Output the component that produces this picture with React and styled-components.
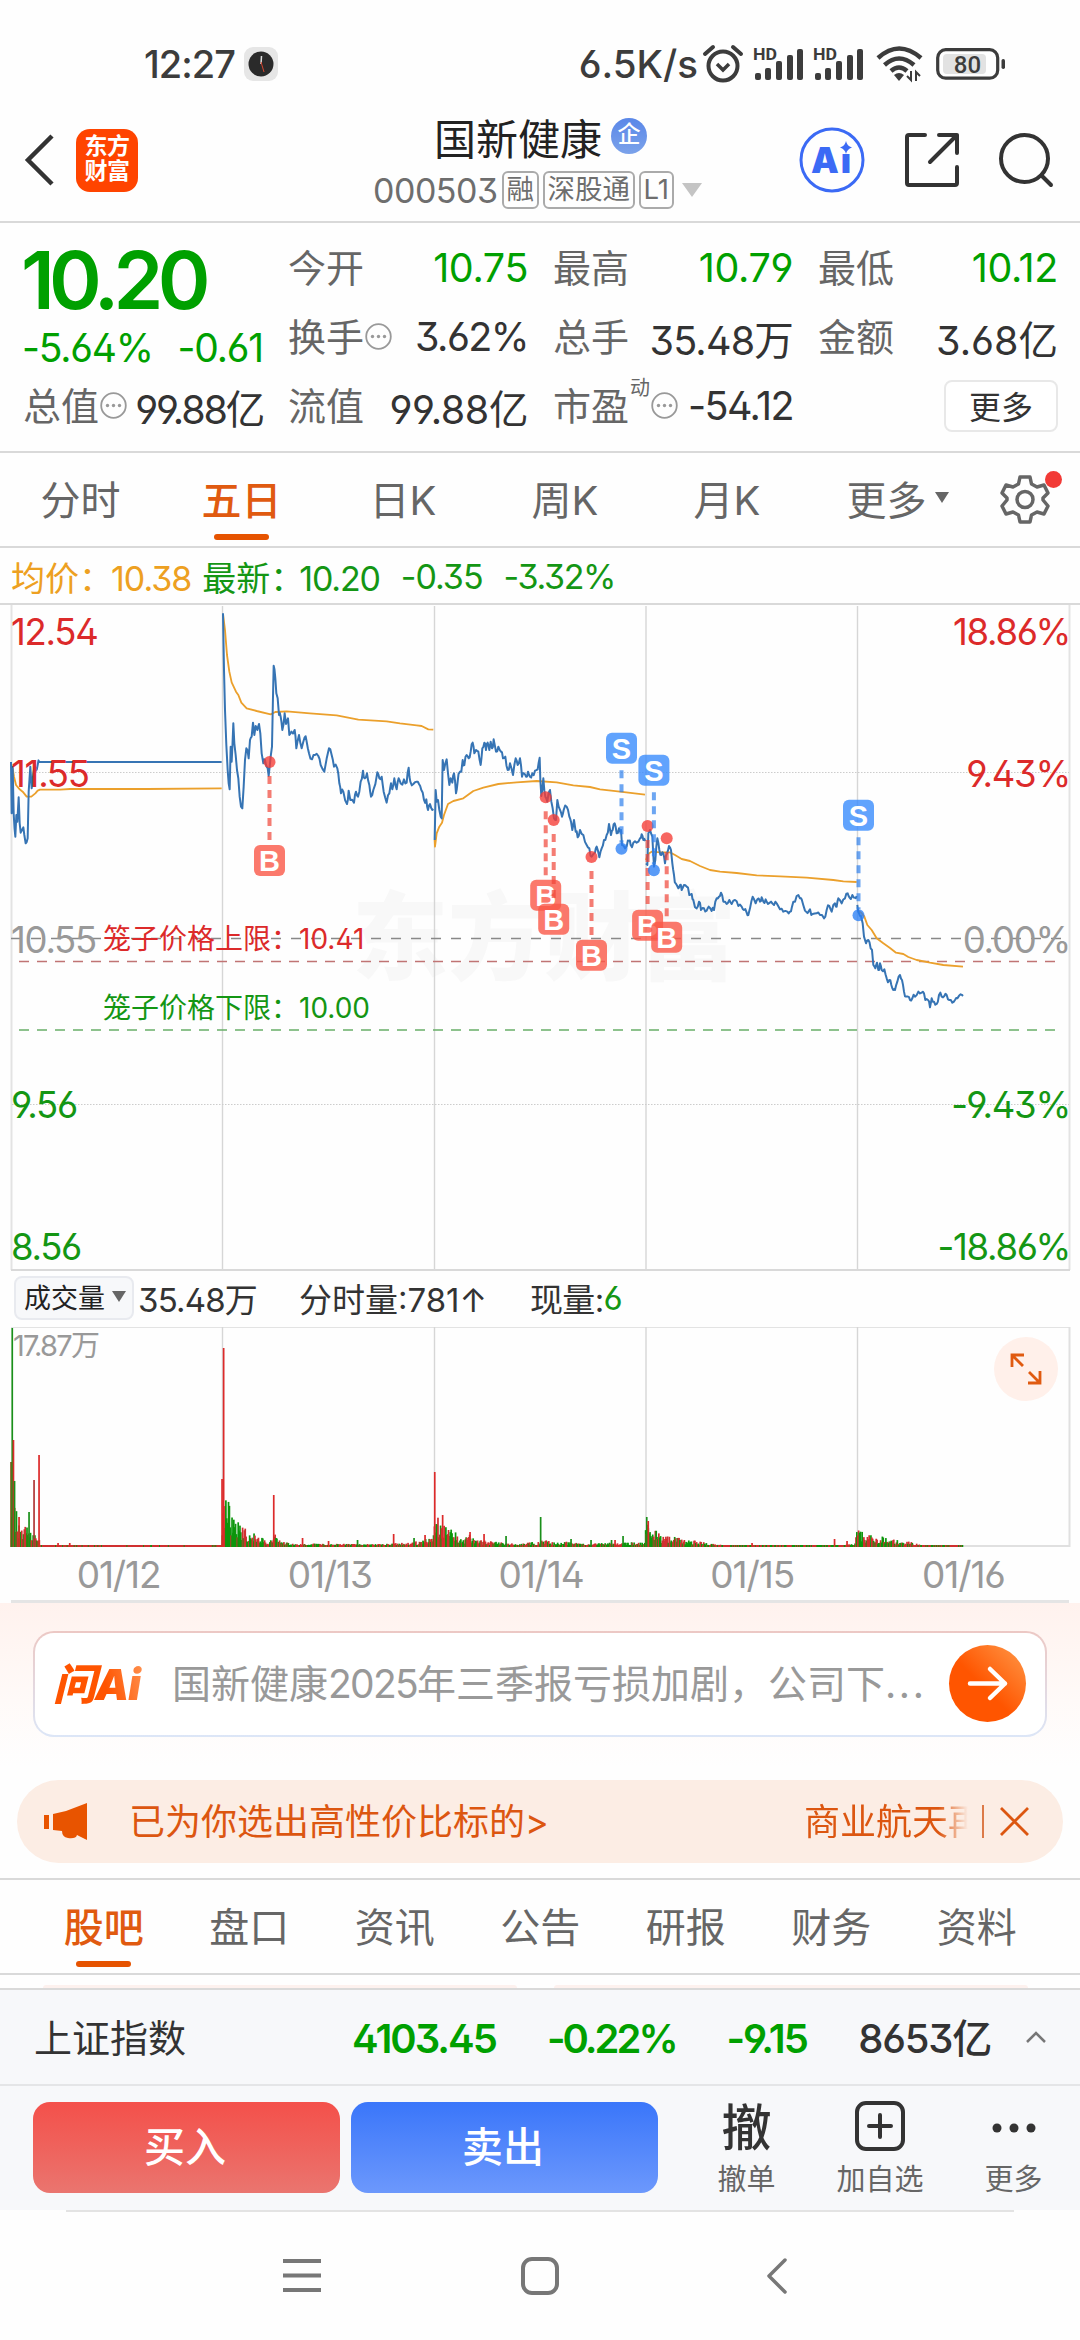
import React from "react";
import styled, { createGlobalStyle } from "styled-components";


const GlobalStyle = createGlobalStyle`
  * {
    box-sizing: border-box;
  }

  body {
    margin: 0;
    background: #fefefe;
    color: #333;
    font-family: Inter, "Noto Sans CJK SC", sans-serif;
    font-feature-settings: "ss01";
    white-space: nowrap;
  }

  svg {
    display: block;
    flex: none;
    overflow: visible;
  }
`;

const Screen = styled.div`
  width: 1080px;
  height: 2340px;
  overflow: hidden;
  display: flex;
  flex-direction: column;
`;

const Num = styled.span`
  font-size: ${(p) => p.$size || 40}px;
  font-weight: ${(p) => p.$weight || 400};
  letter-spacing: ${(p) => p.$spacing ?? -0.03}em;
  margin-left: ${(p) => p.$left || 0}px;
  color: ${(p) => p.$color || "inherit"};
`;

/* status bar */

const StatusBar = styled.div`
  height: 100px;
  padding: 28px 73px 0 144px;
  display: flex;
  align-items: center;
  color: #3c3c3c;
`;

const ClockBadge = styled.div`
  width: 34px;
  height: 34px;
  margin-left: 9px;
  border-radius: 9px;
  background: #e6e6e6;
  display: flex;
  align-items: center;
  justify-content: center;
`;

const StatusRight = styled.div`
  margin-left: auto;
  display: flex;
  align-items: center;
`;

/* header */

const Header = styled.header`
  height: 123px;
  border-bottom: 2px solid #d9d9d9;
  padding: 0 27px 0 24px;
  display: flex;
  align-items: center;
`;

const Logo = styled.div`
  width: 62px;
  height: 63px;
  margin-left: 22px;
  border-radius: 14px;
  background: #ff4400;
  color: #fff;
  font-size: 23px;
  line-height: 25px;
  font-weight: 700;
  text-align: center;
  padding-top: 5px;
  white-space: normal;
  letter-spacing: -0.5px;
`;

const TitleBlock = styled.div`
  width: 332px;
  margin-left: 235px;
  height: 104px;
  display: flex;
  flex-direction: column;
`;

const TitleRow = styled.div`
  display: flex;
  align-items: center;
  height: 56px;
  padding-left: 61px;
  font-size: 42px;
  font-weight: 400;
  color: #222;
`;

const CompanyBadge = styled.div`
  width: 36px;
  height: 36px;
  margin-left: 9px;
  border-radius: 50%;
  background: linear-gradient(#5a87e8, #7ba2ea);
  color: #fff;
  font-size: 23px;
  font-weight: 500;
  line-height: 33px;
  text-align: center;
`;

const CodeRow = styled.div`
  display: flex;
  align-items: center;
  height: 48px;
  padding-top: 4px;
  gap: 4.5px;
  color: #6e6e6e;
`;

const Tag = styled.span`
  height: 38px;
  padding: 0 2.5px;
  border: 2px solid #aaa;
  border-radius: 6px;
  font-size: 27.5px;
  line-height: 32px;
`;

const HeaderIcons = styled.div`
  margin-left: auto;
  display: flex;
  align-items: center;
  gap: 40px;
`;

/* quote */

const Quote = styled.section`
  height: 230px;
  border-bottom: 2px solid #d9d9d9;
  padding: 11px 22px 0 23px;
  display: grid;
  grid-template-columns: 240px 240px 240px 240px;
  grid-template-rows: 69px 69px 69px;
  column-gap: 25px;
`;

const PriceCell = styled.div`
  grid-row: span 2;
  color: #00a000;
  display: flex;
  flex-direction: column;
`;

const BigPrice = styled.div`
  height: 90px;
  margin-left: -2px;
  line-height: 91px;
  font-size: 80px;
  font-weight: 600;
  letter-spacing: -0.072em;
`;

const Change = styled.div`
  height: 50px;
  margin-left: -1px;
  display: flex;
  align-items: center;
  justify-content: space-between;
`;

const Cell = styled.div`
  display: flex;
  align-items: center;
  justify-content: space-between;
`;

const CellLabel = styled.div`
  display: flex;
  align-items: center;
  margin-top: -5px;
  font-size: 38px;
  color: #666;
`;

const Sup = styled.sup`
  font-size: 20px;
  line-height: 20px;
  align-self: flex-start;
  margin-top: 2px;
  margin-left: 1px;
`;

const MoreButton = styled.button`
  width: 114px;
  height: 52px;
  margin-left: auto;
  padding: 0 0 3px;
  border: 2px solid #e8e8e8;
  border-radius: 8px;
  background: #fff;
  color: #333;
  font: 400 32px/42px "Noto Sans CJK SC", sans-serif;
`;

/* tabs */

const Tabs = styled.nav`
  height: ${(p) => p.$height}px;
  padding-left: ${(p) => p.$left || 0}px;
  border-top: ${(p) => (p.$topLine ? "2px solid #d9d9d9" : 0)};
  border-bottom: 2px solid #d9d9d9;
  display: flex;
  flex: none;
`;

const Tab = styled.div`
  width: ${(p) => p.$width}px;
  padding-bottom: 3px;
  display: flex;
  align-items: center;
  justify-content: center;
  position: relative;
  font-size: 40px;
  font-weight: ${(p) => (p.$active ? 500 : 400)};
  color: ${(p) => (p.$active ? "#e05a10" : "#666")};

  &::after {
    content: "";
    display: ${(p) => (p.$active ? "block" : "none")};
    position: absolute;
    bottom: 6px;
    width: 55px;
    height: 6px;
    border-radius: 3px;
    background: #e65300;
  }
`;

const Triangle = styled.i`
  width: 0;
  height: 0;
  margin-left: ${(p) => p.$gap || 0}px;
  border: ${(p) => p.$w}px solid transparent;
  border-top: ${(p) => p.$h}px solid ${(p) => p.$color};
  border-bottom: 0;
`;

const Settings = styled.div`
  width: 76px;
  display: flex;
  align-items: center;
  justify-content: center;
`;

const Legend = styled.div`
  height: 57px;
  padding: 2px 0 0 11px;
  display: flex;
  align-items: center;
  font-size: 34px;
  border-bottom: 2px solid #d9d9d9;
`;

const LegendItem = styled.span`
  color: ${(p) => p.$color};
  margin-right: ${(p) => p.$gap || 0}px;
`;

/* charts */

const ChartBox = styled.div`
  position: relative;
  width: 1080px;
  height: ${(p) => p.$height}px;
  flex: none;
`;

const Axis = styled.div`
  position: absolute;
  inset: 0 10px 0 11px;
  pointer-events: none;
`;

const AxisLabel = styled.span`
  position: absolute;
  top: ${(p) => p.$y}px;
  ${(p) => (p.$right ? "right: 0;" : "left: 0;")}
  transform: translateY(-50%);
  font-size: 36.5px;
  line-height: 40px;
  letter-spacing: -0.035em;
  color: ${(p) => p.$color};
`;

const CageLabel = styled(AxisLabel)`
  left: 92px;
  font-size: 28px;
  letter-spacing: 0;
`;

const VolumeHeader = styled.div`
  height: 55px;
  padding: 0 0 3px 14px;
  display: flex;
  align-items: center;
  color: #333;
`;

const Picker = styled.div`
  width: 120px;
  height: 44px;
  margin-right: 4px;
  border: 2px solid #e8eaef;
  border-radius: 8px;
  background: #f7f8fa;
  display: flex;
  align-items: center;
  padding: 0 0 2px 8px;
  font-size: 27px;
  color: #222;
`;

const MaxVolume = styled.span`
  position: absolute;
  left: 13px;
  top: 3px;
  font-size: 29px;
  line-height: 32px;
  letter-spacing: -0.06em;
  color: #999;
`;

const ExpandButton = styled.div`
  position: absolute;
  right: 22px;
  top: 10px;
  width: 64px;
  height: 64px;
  border-radius: 50%;
  background: #fff0ea;
  display: flex;
  align-items: center;
  justify-content: center;
`;

const Dates = styled.div`
  height: 56px;
  padding: 2px 0 0 2px;
  margin: 0 11px;
  border-bottom: 3px solid #e5e5e5;
  display: grid;
  grid-template-columns: repeat(5, 1fr);
  align-items: center;
  text-align: center;
  color: #999;
`;

/* assistant and notice */

const AskSection = styled.section`
  height: 178px;
  padding: 28px 33px 0;
  background: linear-gradient(#fff2ee, #fffaf8 55%, #fefefe 92%);
`;

const AskBox = styled.div`
  height: 106px;
  border: 2px solid transparent;
  border-radius: 21px;
  background:
    linear-gradient(#fff, #fff) padding-box,
    linear-gradient(#ecc8c4, #dce6f7) border-box;
  display: flex;
  align-items: center;
  padding: 0 19px 0 18px;
`;

const AskLogo = styled.div`
  width: 94px;
  font-size: 43px;
  font-weight: 900;
  font-style: italic;
  letter-spacing: -1px;
  line-height: 50px;
  background: linear-gradient(75deg, #ff5400 55%, #ff9858);
  -webkit-background-clip: text;
  color: transparent;
`;

const AskText = styled.div`
  margin: -5px 0 0 25px;
  width: 766px;
  font-size: 39px;
  color: #999;
`;

const Notice = styled.section`
  height: 83px;
  margin: 0 17px 15px;
  padding: 0 33px 0 27px;
  border-radius: 42px;
  background: #fcede4;
  color: #dc5610;
  display: flex;
  align-items: center;
`;

const NoticeText = styled.span`
  margin: -5px 0 0 41px;
  font-size: 36px;
  font-weight: 400;
`;

const FadeText = styled(NoticeText)`
  width: 164px;
  margin-left: auto;
  overflow: hidden;
  background: linear-gradient(90deg, #dc5610 82%, rgba(220, 86, 16, 0) 100%);
  -webkit-background-clip: text;
  color: transparent;
`;

const Divider = styled.i`
  width: 2px;
  height: 33px;
  margin: 0 15px 0 14px;
  background: #dc7a48;
`;

const CardPeek = styled.div`
  height: 15px;
  flex: none;
  border-bottom: 2px solid #d9d9d9;
  padding: 10px 52px 0 43px;
  display: flex;
  gap: 37px;

  i {
    flex: 1;
    border-radius: 14px 14px 0 0;
    background: #fdf1ee;
  }
`;

/* bottom */

const IndexBar = styled.div`
  height: 96px;
  padding: 0 33px 3px 34px;
  background: #f7f8fa;
  border-bottom: 2px solid #e4e5e7;
  display: flex;
  align-items: center;
  font-size: 38px;
`;

const IndexNumbers = styled.div`
  margin-left: auto;
  display: flex;
  align-items: baseline;
  gap: 51px;
  color: #00a000;
`;

const ActionBar = styled.div`
  height: 124px;
  padding: 16px 0 0 33px;
  background: #f7f8fa;
  display: flex;
`;

const TradeButton = styled.button`
  flex: none;
  width: 307px;
  height: 91px;
  margin-right: 11px;
  padding: 0 3px 7px 0;
  border: 0;
  border-radius: 17px;
  background: linear-gradient(${(p) => p.$from}, ${(p) => p.$to});
  color: #fff;
  font: 500 41px/84px "Noto Sans CJK SC", sans-serif;
`;

const Action = styled.div`
  flex: none;
  width: ${(p) => p.$width}px;
  display: flex;
  flex-direction: column;
  align-items: center;
  font-size: 29px;
  line-height: 34px;
  color: #666;
`;

const ActionIcon = styled.div`
  height: 62px;
  margin: -5px 0 4px;
  display: flex;
  align-items: center;
  font-size: 50px;
  font-weight: 500;
  line-height: 54px;
  color: #333;
`;

const SystemNav = styled.div`
  height: 130px;
  margin: 0 66px;
  border-top: 2px solid #e3e3e3;
  display: flex;
  align-items: center;
  justify-content: center;
  gap: 200px;
`;

const GREEN = "#149614";
const RED = "#dc2a2a";
const GRAY = "#999";

// Each day is drawn in units of a third of a pixel, from the day's own left offset
const days = [
  {
    x: 0,
    price: "33,486 35,640 38,500 41,640 46,710 49,645 52,665 56,592 59,670 62,698 66,690 70,682 73,705 77,730 83,715 86,575 91,500 95,565 100,520 105,500 108,512 113,495 118,486 665,486",
    avg: "38,505 42,530 48,555 58,567 68,575 80,590 94,590 106,580 113,572 120,569 180,569 210,567 440,567 665,565",
  },
  {
    x: 0,
    price: "669,40 672,210 675,330 679,435 683,510 686,550 689,568 692,440 695,485 700,370 703,430 707,465 711,510 715,535 719,590 723,620 727,625 731,560 735,480 739,445 746,475 750,420 755,410 759,368 763,405 767,378 772,390 777,372 781,400 785,460 790,490 795,480 800,500 806,528 812,470 816,440 821,197 826,235 829,280 833,295 837,345 842,350 847,390 854,340 858,372 864,355 868,405 874,395 884,390 889,445 897,405 905,445 914,412 920,425 927,460 936,478 945,465 955,468 962,495 973,515 987,445 995,465 1002,500 1012,505 1018,550 1023,580 1030,575 1041,612 1046,572 1051,600 1062,608 1068,575 1074,590 1082,545 1089,512 1094,535 1101,520 1108,555 1113,590 1120,570 1132,517 1138,535 1145,530 1151,575 1160,608 1168,580 1173,550 1177,568 1183,535 1190,568 1196,535 1202,550 1212,538 1220,548 1226,503 1231,545 1240,552 1250,545 1257,552 1264,570 1272,600 1279,598 1284,630 1290,612 1294,625 1300,627",
    avg: "669,42 675,90 681,165 688,215 695,247 708,275 715,285 724,308 740,325 770,333 812,343 826,336 860,334 930,340 1010,346 1075,359 1160,364 1200,370 1250,376 1265,378 1285,388 1300,389",
  },
  {
    x: 420,
    price: "44,720 47,570 50,605 54,600 58,630 62,650 65,655 68,480 72,510 76,490 80,478 84,520 88,555 92,535 97,548 102,520 108,580 113,545 118,518 124,515 128,480 133,495 140,465 146,475 152,455 158,428 163,460 168,450 175,455 182,495 187,445 193,428 198,450 203,428 208,450 212,425 216,445 221,418 228,455 235,440 243,455 249,475 256,470 263,510 270,490 279,525 287,475 293,495 300,475 306,530 312,520 318,530 324,515 330,530 337,520 345,512 353,508 359,473 361,540 364,588 370,535 376,590 382,605 390,570 394,605 402,655 408,660 412,600 420,630 426,650 431,630 440,620 448,650 453,665 457,690 462,660 467,695 473,712 480,690 490,705 500,735 508,745 515,770 525,758 530,740 538,772 545,745 552,720 560,705 567,672 573,705 578,690 584,670 590,700 597,685 603,690 606,735 615,745 620,740 627,722 632,735 640,728 650,728 660,715 665,703 670,720 676,723",
    avg: "44,720 45,740 50,700 58,680 66,668 72,645 84,612 100,603 130,595 160,573 190,563 235,552 290,547 350,543 410,547 460,556 510,561 540,568 600,575 675,584",
  },
  {
    x: 420,
    price: "678,790 682,795 685,700 690,690 697,710 702,800 706,780 712,715 718,750 724,765 730,760 735,790 741,760 747,738 753,750 757,790 762,825 767,850 775,865 780,855 785,870 792,855 800,860 808,885 815,882 820,900 830,925 837,905 843,930 852,925 860,932 866,920 875,933 882,930 890,895 897,890 903,878 910,905 920,912 928,900 935,912 945,900 955,918 965,920 972,930 980,938 985,945 990,925 998,890 1007,910 1012,898 1020,905 1025,892 1030,905 1037,898 1044,912 1053,905 1062,915 1070,910 1080,928 1090,935 1102,935 1110,935 1116,920 1120,905 1130,888 1140,895 1145,898 1155,932 1170,928 1178,942 1190,940 1200,945 1212,955 1220,930 1228,918 1235,935 1245,910 1250,920 1255,895 1265,910 1275,895 1283,880 1288,892 1297,885 1305,893 1310,888",
    avg: "678,780 684,762 695,755 720,757 750,757 765,765 785,777 810,783 840,798 870,810 900,815 950,819 1010,826 1080,829 1160,833 1240,840 1270,844 1310,846",
  },
  {
    x: 700,
    price: "472,915 477,940 483,948 488,970 492,1010 498,1030 505,1020 512,1045 516,1050 520,1095 526,1105 531,1088 535,1110 540,1090 545,1110 553,1108 560,1135 568,1140 574,1155 580,1170 585,1170 592,1145 600,1125 606,1140 612,1175 618,1190 624,1190 630,1200 637,1195 645,1190 655,1175 665,1178 672,1180 676,1200 684,1200 690,1222 695,1195 702,1205 710,1212 717,1185 725,1190 733,1188 740,1185 748,1200 757,1208 765,1200 772,1195 782,1183 789,1188",
    avg: "472,930 485,940 493,950 502,975 515,990 530,1015 550,1030 570,1044 588,1058 610,1062 625,1071 650,1080 690,1088 730,1095 789,1100",
  },
];

const marks = [
  { t: "B", x: 269.5, dot: 762, box: 860.5 },
  { t: "B", x: 545.7, dot: 797.3, box: 895.3 },
  { t: "B", x: 553.7, dot: 820, box: 919.3 },
  { t: "B", x: 591.5, dot: 857, box: 955.3 },
  { t: "S", x: 621.5, dot: 848.7, box: 748.3 },
  { t: "B", x: 647.6, dot: 826, box: 925.3 },
  { t: "S", x: 653.9, dot: 870.3, box: 770.3 },
  { t: "B", x: 666.7, dot: 838.3, box: 937.3 },
  { t: "S", x: 858.5, dot: 915.3, box: 815.3 },
];

const dayLines = [222.5, 434.5, 646, 857.5];

const noise = (n) => {
  const v = Math.sin(n * 12.9898) * 43758.5453;
  return v - Math.floor(v);
};

// adds a small tick between two neighbouring prices
const roughen = (points) => {
  const list = points.split(" ").map((p) => p.split(",").map(Number));
  return list
    .flatMap(([x, y], i) => {
      const next = list[i + 1];
      if (!next || next[0] - x > 20 || next[0] - x < 5) return [[x, y]];
      const mx = (x + next[0]) / 2;
      const my = (y + next[1]) / 2 + (noise(x) - 0.5) * 20;
      return [[x, y], [mx, my]];
    })
    .join(" ");
};

const volumeLevels = [
  [12, 60], [15, 40], [18, 22], [22, 13], [26, 20], [28, 28], [32, 12], [36, 20], [39, 12], [40, 1.5], [222, 1.5],
  [223, 50], [226, 46], [230, 34], [236, 23], [242, 17], [250, 13], [260, 9], [270, 5], [275, 14], [280, 6], [290, 3], [380, 2.5], [412, 4], [433, 8],
  [434, 28], [440, 24], [446, 19], [452, 14], [462, 9], [470, 11], [480, 6], [500, 4], [520, 3], [545, 6], [555, 4], [575, 5], [590, 3], [620, 4], [645, 4],
  [646, 30], [650, 16], [656, 14], [664, 9], [670, 9], [676, 10], [685, 6], [695, 6], [710, 3], [730, 1.5], [840, 1.5], [855, 3],
  [857, 15], [865, 12], [872, 10], [880, 9], [890, 8], [900, 5], [910, 5], [920, 2], [963, 1.5],
];

const spikes = [
  [11, 85, "#7c5010"], [12.2, 219, "#1a8f1a"], [13.4, 107, "#dc2a2a"], [14.5, 66, "#1a8f1a"], [19, 30, "#dc2a2a"], [29, 35, "#1a8f1a"],
  [34, 67, "#b03838"], [39, 92, "#dc2a2a"], [58, 4, "#dc2a2a"], [69.7, 4, "#dc2a2a"],
  [222, 68, "#dc2a2a"], [223.6, 199, "#dc2a2a"], [273.7, 52, "#dc2a2a"], [302.5, 9, "#dc2a2a"], [328.5, 6, "#dc2a2a"], [357.5, 7, "#1a8f1a"],
  [393.6, 13, "#dc2a2a"], [414, 9, "#1a8f1a"], [425, 12, "#dc2a2a"],
  [434.7, 75, "#dc2a2a"], [442.6, 32, "#dc2a2a"], [470, 15, "#dc2a2a"], [484, 13, "#dc2a2a"], [506, 11, "#1a8f1a"], [540.6, 30, "#1a8f1a"],
  [571, 8, "#1a8f1a"], [591, 7, "#1a8f1a"], [611.5, 7, "#1a8f1a"], [615, 7, "#dc2a2a"], [623, 11, "#1a8f1a"],
  [646.7, 30, "#1a8f1a"], [648.2, 26, "#dc2a2a"], [752, 4, "#dc2a2a"], [834.5, 8, "#dc2a2a"], [847, 6, "#dc2a2a"],
];

const volumeBars = [];
for (let x = 12; x < 963; x += 0.88) {
  const i = volumeLevels.findIndex((l) => l[0] > x);
  const [x0, h0] = volumeLevels[i - 1];
  const [x1, h1] = volumeLevels[i];
  const level = h0 + ((h1 - h0) * (x - x0)) / (x1 - x0);
  const greenShare = x > 222 && x < 242 ? 0.95 : x > 40 && x < 222 ? 0.1 : 0.5;
  volumeBars.push([
    x,
    level < 2 ? 2 : Math.max(2, level * (0.35 + noise(x) * 0.85)),
    noise(x + 7) < greenShare ? "#0c960c" : "#d03030",
  ]);
}

const PriceChart = () => (
  <ChartBox $height={667}>
    <svg width="1080" height="667" viewBox="0 605 1080 667" fill="none">
      <text x="544" y="972" textAnchor="middle" fontFamily="Noto Sans CJK SC" fontSize="96" fontWeight="900" fill="#f8f8f8">东方财富</text>
      {dayLines.map((x) => (
        <path key={x} d={`M${x} 606V1270`} stroke="#d6d6d6" strokeWidth="1.4" />
      ))}
      <path d="M11.5 605V1270M1069.5 605V1270" stroke="#e3e3e3" strokeWidth="2" />
      <path d="M11 1270H1070" stroke="#d9d9d9" strokeWidth="2" />
      <path d="M12 772.5H1069M12 1104.5H1069" stroke="#ccc" strokeDasharray="1.5 1.5" />
      <path d="M11 938.5H1069" stroke="#888" strokeWidth="1.5" strokeDasharray="10 10" />
      <path d="M19 961.5H1055" stroke="#c07474" strokeWidth="1.4" strokeDasharray="10 8" />
      <path d="M19 1030H1055" stroke="#68ae68" strokeWidth="1.4" strokeDasharray="10 8" />
      {days.map((d, i) => (
        <g key={i} transform={`translate(${d.x} 600) scale(0.33333)`} strokeLinejoin="round">
          <polyline points={d.avg} stroke="#eba02c" strokeWidth="5.5" />
          <polyline points={roughen(d.price)} stroke="#3674b4" strokeWidth="6" />
        </g>
      ))}
      {marks.map((m) => {
        const buy = m.t === "B";
        return (
          <g key={m.x}>
            <path
              d={buy ? `M${m.x} ${m.dot + 14}V${m.box - 20}` : `M${m.x} ${m.box + 22}V${m.dot - 6}`}
              stroke={buy ? "#f04438" : "#2f80ed"}
              strokeOpacity="0.7"
              strokeWidth="4"
              strokeDasharray="8 6"
            />
            <circle cx={m.x} cy={m.dot} r="6" fill={buy ? "#f53b35" : "#2a7ff5"} fillOpacity="0.78" />
            <rect x={m.x - 15.5} y={m.box - 15.5} width="31" height="31" rx="6" fill={buy ? "#fa5847" : "#3a8cfc"} fillOpacity="0.8" />
            <text x={m.x} y={m.box + 10.5} textAnchor="middle" fontFamily="Liberation Sans" fontSize="29" fontWeight="700" fill="#fff">
              {m.t}
            </text>
          </g>
        );
      })}
    </svg>
    <Axis>
      <AxisLabel $y={27} $color={RED}>12.54</AxisLabel>
      <AxisLabel $y={169} $color={RED}>11.55</AxisLabel>
      <AxisLabel $y={335} $color={GRAY}>10.55</AxisLabel>
      <AxisLabel $y={500} $color={GREEN}>9.56</AxisLabel>
      <AxisLabel $y={642} $color={GREEN}>8.56</AxisLabel>
      <AxisLabel $right $y={27} $color={RED}>18.86%</AxisLabel>
      <AxisLabel $right $y={169} $color={RED}>9.43%</AxisLabel>
      <AxisLabel $right $y={335} $color={GRAY}>0.00%</AxisLabel>
      <AxisLabel $right $y={500} $color={GREEN}>-9.43%</AxisLabel>
      <AxisLabel $right $y={642} $color={GREEN}>-18.86%</AxisLabel>
      <CageLabel $y={334} $color={RED}>笼子价格上限：10.41</CageLabel>
      <CageLabel $y={403} $color={GREEN}>笼子价格下限：10.00</CageLabel>
    </Axis>
  </ChartBox>
);

const VolumeChart = () => (
  <ChartBox $height={220}>
    <svg width="1080" height="220" fill="none">
      <path d="M11 .5H1070" stroke="#e3e3e3" />
      {dayLines.map((x) => (
        <path key={x} d={`M${x} 0V219`} stroke="#d6d6d6" strokeWidth="1.4" />
      ))}
      <path d="M1069.5 0V219H11" stroke="#e0e0e0" strokeWidth="2" />
      {[...volumeBars, ...spikes].map(([x, h, color], i) => (
        <rect key={i} x={x - 0.8} y={220 - h} width="1.7" height={h} fill={color} />
      ))}
    </svg>
    <MaxVolume>17.87万</MaxVolume>
    <ExpandButton>
      <svg width="32" height="32" viewBox="0 0 32 32" fill="none" stroke="#e05a10" strokeWidth="2.8">
        <path d="M2 14V2H14M2 2L13 13M30 18V30H18M30 30L19 19" />
      </svg>
    </ExpandButton>
  </ChartBox>
);

const SignalIcon = styled.svg`
  margin-right: 10px;
`;

const Signal = () => (
  <SignalIcon width="50" height="34" fill="#3c3c3c">
    <text x="-1" y="13" fontFamily="Roboto" fontSize="17" fontWeight="700" textLength="24" lengthAdjust="spacingAndGlyphs">HD</text>
    <rect x="1" y="26" width="6" height="7" rx="2" />
    <rect x="11" y="21" width="6" height="12" rx="2" />
    <rect x="22" y="14" width="6" height="19" rx="2" />
    <rect x="33" y="8" width="6" height="25" rx="2" />
    <rect x="43" y="2" width="6" height="31" rx="2" />
  </SignalIcon>
);

const AlarmIcon = styled.svg`
  margin: 0 11px 0 5px;
`;

const WifiIcon = styled.svg`
  margin: 0 12px 0 2px;
`;

const DotsIcon = styled.svg`
  margin: 4px 0 0 1px;
`;

const Dots = () => (
  <DotsIcon width="27" height="27" viewBox="0 0 27 27">
    <circle cx="13.5" cy="13.5" r="12.3" fill="none" stroke="#999" strokeWidth="1.8" />
    <g fill="#999">
      <circle cx="7.5" cy="13.5" r="1.7" />
      <circle cx="13.5" cy="13.5" r="1.7" />
      <circle cx="19.5" cy="13.5" r="1.7" />
    </g>
  </DotsIcon>
);

const Stat = ({ label, value, green, dots, sup, spacing = -0.01 }) => (
  <Cell>
    <CellLabel>
      {label}
      {sup && <Sup>{sup}</Sup>}
      {dots && <Dots />}
    </CellLabel>
    <Num $size={39.5} $spacing={spacing} $color={green ? "#00a000" : "#333"}>{value}</Num>
  </Cell>
);

const SendIcon = styled.svg`
  margin-left: auto;
`;

const CaretIcon = styled.svg`
  margin: 3px 0 0 34px;
`;

const PlusIcon = styled.svg`
  margin-top: -5px;
`;

const App = () => (
  <Screen>
    <GlobalStyle />
    <StatusBar>
      <Num $size={38} $weight={500} $spacing={-0.025}>12:27</Num>
      <ClockBadge>
        <svg width="26" height="26" viewBox="0 0 26 26">
          <circle cx="13" cy="13" r="12.5" fill="#2a2a2a" />
          <path d="M13 13L13.5 5" stroke="#ddd" strokeWidth="1.5" />
          <path d="M13 11L16 21" stroke="#d8452e" strokeWidth="1" />
        </svg>
      </ClockBadge>
      <StatusRight>
        <Num $size={38.5} $weight={500} $spacing={0}>6.5K/s</Num>
        <AlarmIcon width="40" height="38" viewBox="0 0 40 38" fill="none" stroke="#3c3c3c" strokeWidth="4">
          <circle cx="20" cy="21" r="14.5" />
          <path d="M2 9L10 2M38 9L30 2" strokeLinecap="round" />
          <path d="M14 19L20 25L26 19" strokeWidth="3.5" />
        </AlarmIcon>
        <Signal />
        <Signal />
        <WifiIcon width="48" height="36" viewBox="0 0 48 36" fill="none" stroke="#3c3c3c" strokeWidth="4.5">
          <path d="M2 12Q23 -7 45 12M8.5 19Q23 6 38 19M15 25Q23 18 31 25" />
          <path d="M23 35L18 29Q23 25 28 29Z" fill="#3c3c3c" stroke="none" />
          <path d="M35 25V34L31 30M40 35V26L44 30" strokeWidth="2" />
        </WifiIcon>
        <svg width="71" height="32" viewBox="0 0 71 32" fill="none">
          <rect x="7" y="6" width="43" height="20" rx="4" fill="#e2e2e2" />
          <rect x="1.7" y="1.7" width="60" height="28.5" rx="8" stroke="#3c3c3c" strokeWidth="3.2" />
          <rect x="65.5" y="11" width="3.5" height="10" rx="1.7" fill="#3c3c3c" />
          <text x="31.5" y="24.5" textAnchor="middle" fontFamily="Roboto" fontSize="24" fontWeight="500" fill="#3c3c3c">80</text>
        </svg>
      </StatusRight>
    </StatusBar>

    <Header>
      <svg width="30" height="52" viewBox="0 0 30 52" fill="none" stroke="#333" strokeWidth="4.5">
        <path d="M28 2L4 26L28 50" />
      </svg>
      <Logo>东方<br />财富</Logo>
      <TitleBlock>
        <TitleRow>
          国新健康
          <CompanyBadge>企</CompanyBadge>
        </TitleRow>
        <CodeRow>
          <Num $size={34} $spacing={-0.015}>000503</Num>
          <Tag>融</Tag>
          <Tag>深股通</Tag>
          <Tag>L1</Tag>
          <Triangle $gap={4} $w={10} $h={14} $color="#c4c4c4" />
        </CodeRow>
      </TitleBlock>
      <HeaderIcons>
        <svg width="66" height="66" viewBox="0 0 66 66">
          <circle cx="33" cy="33" r="31" fill="none" stroke="#3b6af5" strokeWidth="3" />
          <text x="12" y="46" fontFamily="Inter" fontSize="35" fontWeight="900" fill="#3b6af5" textLength="40">Ai</text>
          <rect x="40" y="17" width="14" height="9.5" fill="#fefefe" />
          <path d="M47 14Q48 19 53 20.5Q48 22 47 27Q46 22 41 20.5Q46 19 47 14Z" fill="#3b6af5" />
        </svg>
        <svg width="54" height="54" viewBox="0 0 54 54" fill="none" stroke="#333" strokeWidth="4" strokeLinecap="round" strokeLinejoin="round">
          <path d="M20 2H4Q2 2 2 4V50Q2 52 4 52H50Q52 52 52 50V34" />
          <path d="M34 2H52V20M52 2L25 29" />
        </svg>
        <svg width="54" height="54" viewBox="0 0 54 54" fill="none" stroke="#333" strokeWidth="4" strokeLinecap="round">
          <circle cx="25.5" cy="25.5" r="23.5" />
          <path d="M43 43L52 52" />
        </svg>
      </HeaderIcons>
    </Header>

    <Quote>
      <PriceCell>
        <BigPrice>10.20</BigPrice>
        <Change>
          <Num $size={39}>-5.64%</Num>
          <Num $size={39}>-0.61</Num>
        </Change>
      </PriceCell>
      <Stat label="今开" value="10.75" green />
      <Stat label="最高" value="10.79" green />
      <Stat label="最低" value="10.12" green />
      <Stat label="换手" value="3.62%" dots spacing={-0.04} />
      <Stat label="总手" value="35.48万" spacing={-0.02} />
      <Stat label="金额" value="3.68亿" spacing={0} />
      <Stat label="总值" value="99.88亿" dots spacing={-0.055} />
      <Stat label="流值" value="99.88亿" />
      <Stat label="市盈" value="-54.12" dots sup="动" spacing={-0.04} />
      <Cell><MoreButton>更多</MoreButton></Cell>
    </Quote>

    <Tabs $height={95}>
      <Tab $width={161}>分时</Tab>
      <Tab $width={161} $active>五日</Tab>
      <Tab $width={162}>日K</Tab>
      <Tab $width={162}>周K</Tab>
      <Tab $width={162}>月K</Tab>
      <Tab $width={179}>
        更多
        <Triangle $gap={8} $w={7} $h={11} $color="#666" />
      </Tab>
      <Settings>
        <svg width="60" height="60" viewBox="0 0 60 60" fill="none" stroke="#666" strokeWidth="3.5" strokeLinejoin="round">
          <path d="M25 8H35L36.500 15L42 18L49 16L53 24L48 29V31L53 37L49 45L42 43L36.500 46L35 53H25L23.500 46L18 43L11 45L7 37L12 31V29L7 24L11 16L18 18L23.500 15Z" />
          <circle cx="30" cy="30.5" r="8" />
          <circle cx="58.5" cy="10.5" r="8.5" fill="#f23a36" stroke="none" />
        </svg>
      </Settings>
    </Tabs>

    <Legend>
      <LegendItem $color="#eda021" $gap={11}>均价：<Num $size={34} $left={-2} $spacing={-0.03}>10.38</Num></LegendItem>
      <LegendItem $color={GREEN} $gap={21}>最新：<Num $size={34} $left={-5} $spacing={-0.035}>10.20</Num></LegendItem>
      <LegendItem $color={GREEN} $gap={21}><Num $size={34} $spacing={-0.03}>-0.35</Num></LegendItem>
      <LegendItem $color={GREEN}><Num $size={34} $spacing={-0.04}>-3.32%</Num></LegendItem>
    </Legend>

    <PriceChart />

    <VolumeHeader>
      <Picker>
        成交量
        <Triangle $gap={7} $w={7} $h={11} $color="#666" />
      </Picker>
      <Num $size={33} $spacing={-0.025}>35.48万</Num>
      <Num $size={33} $left={42} $spacing={0}>分时量:781↑</Num>
      <Num $size={33} $left={43} $spacing={-0.02}>现量:</Num>
      <Num $size={33} $color={GREEN}>6</Num>
    </VolumeHeader>

    <VolumeChart />

    <Dates>
      <Num $size={37}>01/12</Num>
      <Num $size={37}>01/13</Num>
      <Num $size={37}>01/14</Num>
      <Num $size={37}>01/15</Num>
      <Num $size={37}>01/16</Num>
    </Dates>

    <AskSection>
      <AskBox>
        <AskLogo>问Ai</AskLogo>
        <AskText>
          国新健康<Num $size={39} $spacing={-0.045}>2025</Num>年三季报亏损加剧，公司下<Num $size={39} $spacing={0.07}>...</Num>
        </AskText>
        <SendIcon width="77" height="77" viewBox="0 0 77 77">
          <defs>
            <linearGradient id="go" x1="0" y1="1" x2="1" y2="0">
              <stop offset="0.45" stopColor="#ff5500" />
              <stop offset="1" stopColor="#ff9a4a" />
            </linearGradient>
          </defs>
          <circle cx="38.5" cy="38.5" r="38.5" fill="url(#go)" />
          <path d="M21 38.500H56M41 24L56 38.500L41 53" fill="none" stroke="#fff" strokeWidth="4.5" strokeLinecap="round" strokeLinejoin="round" />
        </SendIcon>
      </AskBox>
    </AskSection>

    <Notice>
      <svg width="44" height="38" viewBox="0 0 44 38" fill="#e85400">
        <path d="M0 12H5V26H0ZM9 11L22 8L43 0V37L33 32Q32 36 24 35Q18 34 18 28L9 27Z" />
      </svg>
      <NoticeText>已为你选出高性价比标的&gt;</NoticeText>
      <FadeText>商业航天再</FadeText>
      <Divider />
      <svg width="31" height="31" viewBox="0 0 31 31" fill="none" stroke="#dc5610" strokeWidth="2.8">
        <path d="M2 2L29 29M29 2L2 29" />
      </svg>
    </Notice>

    <Tabs $height={97} $left={31} $topLine>
      {["股吧", "盘口", "资讯", "公告", "研报", "财务", "资料"].map((name, i) => (
        <Tab key={name} $width={145.5} $active={i === 0}>{name}</Tab>
      ))}
    </Tabs>
    <CardPeek><i /><i /></CardPeek>

    <IndexBar>
      上证指数
      <IndexNumbers>
        <Num $size={40} $weight={600} $spacing={-0.05}>4103.45</Num>
        <Num $size={40} $weight={600} $spacing={-0.075}>-0.22%</Num>
        <Num $size={40} $weight={600} $spacing={-0.045}>-9.15</Num>
        <Num $size={40} $weight={500} $spacing={-0.03} $color="#333">8653亿</Num>
      </IndexNumbers>
      <CaretIcon width="22" height="13" viewBox="0 0 22 13" fill="none" stroke="#777" strokeWidth="2.5">
        <path d="M2 11L11 2L20 11" />
      </CaretIcon>
    </IndexBar>

    <ActionBar>
      <TradeButton $from="#f4504a" $to="#ea756f">买入</TradeButton>
      <TradeButton $from="#3a76fa" $to="#6c98fc">卖出</TradeButton>
      <Action $width={155}>
        <ActionIcon>撤</ActionIcon>
        撤单
      </Action>
      <Action $width={112}>
        <ActionIcon>
          <PlusIcon width="50" height="50" viewBox="0 0 50 50" fill="none" stroke="#333" strokeWidth="4" strokeLinecap="round">
            <rect x="2" y="2" width="46" height="46" rx="9" />
            <path d="M25 14V36M14 25H36" />
          </PlusIcon>
        </ActionIcon>
        加自选
      </Action>
      <Action $width={155}>
        <ActionIcon>
          <svg width="44" height="10" fill="#333">
            <circle cx="5" cy="5" r="4.5" />
            <circle cx="22" cy="5" r="4.5" />
            <circle cx="39" cy="5" r="4.5" />
          </svg>
        </ActionIcon>
        更多
      </Action>
    </ActionBar>

    <SystemNav>
      <svg width="38" height="36" fill="none" stroke="#777" strokeWidth="4">
        <path d="M0 3H38M0 17.500H38M0 32H38" />
      </svg>
      <svg width="38" height="38" fill="none" stroke="#777" strokeWidth="4">
        <rect x="2" y="2" width="34" height="34" rx="9" />
      </svg>
      <svg width="38" height="36" fill="none" stroke="#777" strokeWidth="3.5" strokeLinecap="round" strokeLinejoin="round">
        <path d="M26 2L10 18L26 34" />
      </svg>
    </SystemNav>
  </Screen>
);

export default App;
